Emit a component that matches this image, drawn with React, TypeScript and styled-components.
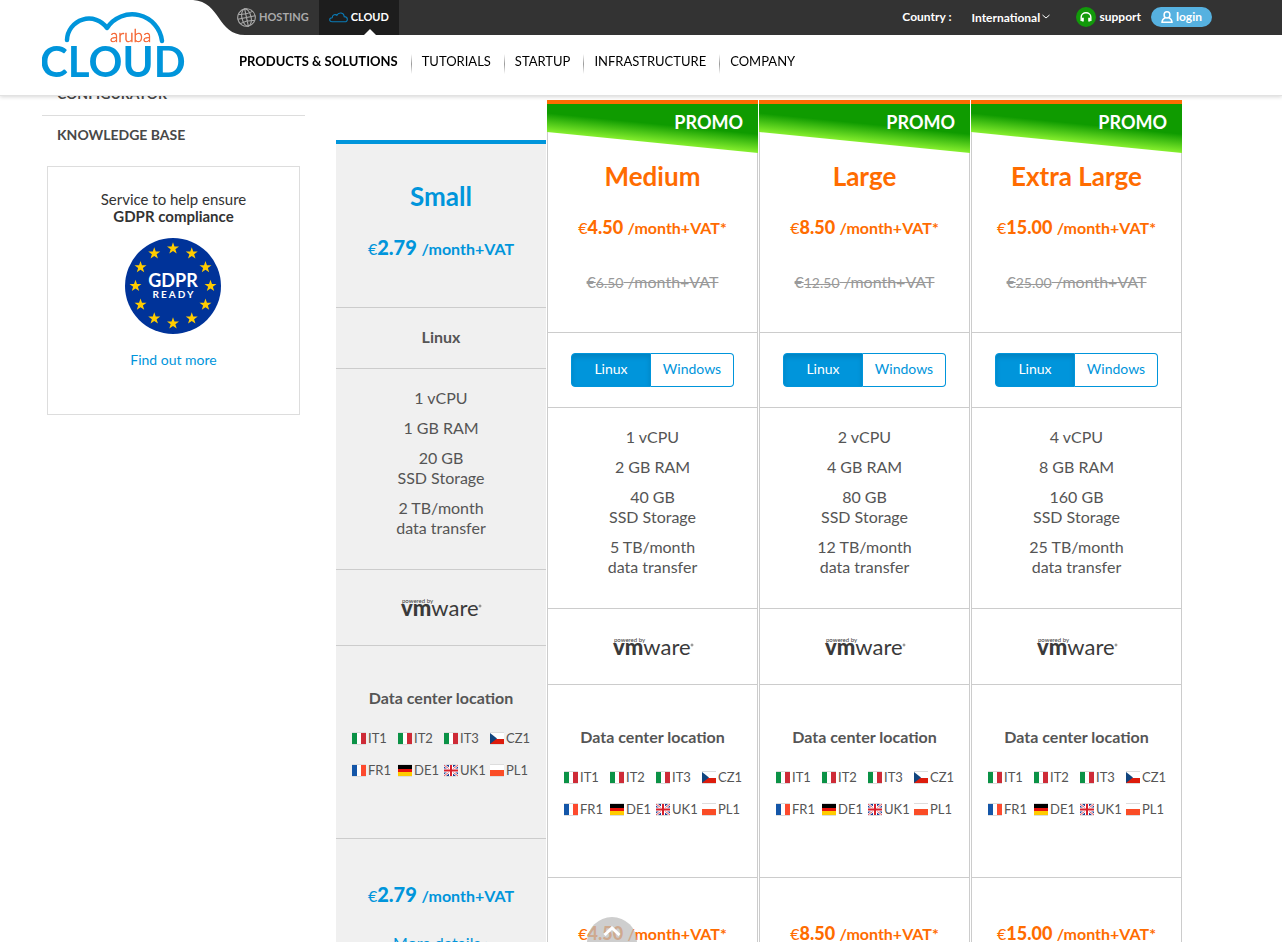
import React, { useState } from "react";
import styled, { createGlobalStyle, css } from "styled-components";

const blue = "#0095db";
const orange = "#ff6c00";
const line = "#cccccc";

const GlobalStyle = createGlobalStyle`
  *, *::before, *::after { box-sizing: border-box; }
  html, body, #root { height: 100%; }
  body { margin: 0; background: #fff; color: #555; font-family: Lato, "Liberation Sans", sans-serif; font-size: 16px; line-height: 20px; }
  button, select { font-family: inherit; }
  a { text-decoration: none; color: inherit; }
  h2, h3, p, ul { margin: 0; padding: 0; }
  ul { list-style: none; }
`;

const Page = styled.div`
  height: 100vh;
  overflow-y: auto;
  scrollbar-width: none;
`;

/* ---------- header ---------- */

const Header = styled.header`
  position: fixed;
  top: 0;
  left: 0;
  right: 0;
  z-index: 1;
  background: linear-gradient(#333, #333) right top / 50% 35px no-repeat #fff;
  border-bottom: 1px solid #e2e2e2;
  box-shadow: 0 1px 4px rgba(0, 0, 0, 0.16);
`;

const HeaderInner = styled.div`
  display: flex;
  max-width: 1200px;
  margin: 0 auto;
`;

const Brand = styled.a`
  flex: 0 0 152px;
  padding: 8px 0 0 1px;
  svg { display: block; }
`;

const HeaderBars = styled.div`
  flex: 1;
`;

const TopBar = styled.div`
  position: relative;
  display: flex;
  align-items: center;
  height: 35px;
  padding: 0 29px 1px 44px;
  background: #333;
  color: #fff;
  font-size: 12px;
  font-weight: 700;
`;

const Curve = styled.svg`
  position: absolute;
  left: 0;
  top: 0;
`;

const SiteTab = styled.a<{ $active?: boolean }>`
  position: relative;
  display: flex;
  align-items: center;
  align-self: flex-start;
  gap: 3px;
  height: 35px;
  padding: 0 10px 1px 0;
  color: #aaa;
  font-size: 11px;
  ${(p) =>
    p.$active &&
    css`
      padding-left: 10px;
      background: #1d1d1d;
      color: #fff;
      &::after {
        content: "";
        position: absolute;
        bottom: 0;
        left: 45px;
        border: 6px solid transparent;
        border-top: 0;
        border-bottom-color: #fff;
      }
    `}
`;

const Country = styled.label`
  display: flex;
  align-items: center;
  gap: 20px;
  margin-left: auto;
`;

const SelectBox = styled.span`
  display: flex;
  align-items: center;
`;

const Select = styled.select`
  appearance: none;
  border: 0;
  padding: 0;
  background: transparent;
  color: inherit;
  font-size: 12px;
  font-weight: 700;
`;

const Support = styled.a`
  display: flex;
  align-items: center;
  gap: 4px;
  margin: 0 10px 0 26px;
`;

const Login = styled.a`
  display: flex;
  align-items: center;
  gap: 3px;
  height: 20px;
  padding: 0 10px;
  border-radius: 10px;
  background: #56b1e0;
`;

const Nav = styled.nav`
  display: flex;
  height: 60px;
  padding: 16px 0 0 46px;
`;

const NavLink = styled.a<{ $active?: boolean }>`
  color: #000;
  font-size: 13px;
  font-weight: ${(p) => (p.$active ? 700 : 400)};
  &:not(:first-child)::before {
    content: "";
    display: inline-block;
    width: 1px;
    height: 20px;
    margin: 3px 10px 0 13px;
    vertical-align: top;
    background: linear-gradient(#fff, #999, #fff);
  }
`;

/* ---------- page body ---------- */

const Main = styled.main`
  display: flex;
  align-items: flex-start;
  gap: 31px;
  max-width: 1200px;
  margin: 0 auto;
  padding: 75px 59px 0 1px;
`;

const Sidebar = styled.aside`
  flex: 0 0 263px;
`;

const SideLink = styled.a`
  display: block;
  height: 41px;
  padding: 9px 15px;
  border-bottom: 1px solid #ddd;
  color: #484848;
  font-size: 14px;
  font-weight: 700;
  &:last-of-type { border-bottom: 0; }
`;

const GdprCard = styled.section`
  display: flex;
  flex-direction: column;
  align-items: center;
  height: 249px;
  margin: 9px 5px 0;
  padding-top: 24px;
  border: 1px solid #ddd;
  color: #333;
  font-size: 15px;
  line-height: 17px;
  text-align: center;
  svg { margin: 13px 0 15px; }
  a { color: ${blue}; font-size: 14px; line-height: 20px; }
`;

const Plans = styled.div`
  flex: 1;
  display: grid;
  grid-template-columns: 210px repeat(3, 1fr);
  gap: 1px;
  padding-top: 25px;
`;

const Plan = styled.article<{ $promo: boolean }>`
  text-align: center;
  ${(p) =>
    p.$promo
      ? css`
          --accent: ${orange};
          --price-size: 18px;
          border: 1px solid ${line};
          border-top: 0;
        `
      : css`
          --accent: ${blue};
          --price-size: 20px;
          margin-top: 40px;
          border-top: 4px solid ${blue};
          background: #f0f0f0;
        `}
`;

const Ribbon = styled.div`
  margin: 0 -1px;
  border-top: 4px solid ${orange};
  height: 53px;
`;

const RibbonShape = styled.div`
  height: 49px;
  padding: 8px 15px;
  color: #fff;
  font-size: 18px;
  font-weight: 700;
  text-align: right;
  background: linear-gradient(185.7deg, #0f9b00 43%, #86ef2e 70%);
  clip-path: polygon(0 0, 100% 0, 100% 100%, 0 28px);
`;

const Cell = styled.div<{ $height: number; $top: number }>`
  height: ${(p) => p.$height}px;
  padding-top: ${(p) => p.$top}px;
  border-bottom: 1px solid ${line};
  &:last-child { border-bottom: 0; }
`;

const PlanName = styled.h2`
  color: var(--accent);
  font-size: 26px;
  font-weight: 700;
  line-height: 32px;
`;

const Price = styled.p<{ $gap?: number }>`
  margin-top: ${(p) => p.$gap ?? 0}px;
  color: var(--accent);
  line-height: 26px;
  font-weight: 700;
  span { font-weight: 400; }
  strong { font-size: var(--price-size); }
`;

const OldPrice = styled.p`
  margin-top: 31px;
  color: #999;
  line-height: 20px;
  text-decoration: line-through;
  small { font-size: 14px; }
`;

const Toggle = styled.div`
  display: flex;
  width: 163px;
  height: 34px;
  margin: 0 auto;
`;

const ToggleButton = styled.button<{ $on: boolean }>`
  flex: ${(p) => (p.$on ? "1 1 80px" : "1 1 83px")};
  padding: 0 0 4px;
  border: 1px solid ${blue};
  background: ${(p) => (p.$on ? blue : "#fff")};
  color: ${(p) => (p.$on ? "#fff" : blue)};
  box-shadow: ${(p) => (p.$on ? "inset 0 3px 5px rgba(0,0,0,.125)" : "none")};
  font-size: 14px;
  &:first-child { border-radius: 4px 0 0 4px; }
  &:last-child { border-radius: 0 4px 4px 0; border-left: 0; }
`;

const Specs = styled.ul`
  display: flex;
  flex-direction: column;
  gap: 10px;
`;

const Heading = styled.h3`
  font-size: 16px;
  font-weight: 700;
  line-height: 20px;
`;

const Locations = styled.ul`
  display: grid;
  grid-template-columns: repeat(4, 46px);
  gap: 12px 0;
  margin-top: 20px;
  padding-left: 16px;
  li {
    display: flex;
    align-items: center;
    gap: 2px;
    font-size: 13px;
  }
`;

const MoreLink = styled.a`
  display: block;
  margin-top: 24px;
  color: ${blue};
`;

const BackTopTrack = styled.div`
  position: fixed;
  left: 0;
  right: 0;
  bottom: -25px;
  display: flex;
  justify-content: center;
  padding-right: 58px;
  pointer-events: none;
`;

const BackTop = styled.button`
  width: 50px;
  height: 50px;
  padding: 0;
  border: 0;
  border-radius: 50%;
  background: rgba(190, 190, 190, 0.75);
  pointer-events: auto;
  svg { display: block; margin: -16px auto 0; }
`;

/* ---------- drawings ---------- */

const Logo = () => (
  <svg width="146" height="76" viewBox="42 8 146 76" role="img" aria-label="Aruba Cloud">
    <g fill="none" stroke={blue} strokeWidth="4.5" strokeLinecap="round" strokeLinejoin="round">
      <path d="M67 40A22 22 0 0 1 107 28A30 30 0 0 1 162 41" />
    </g>
    <text x="110" y="42" fontSize="17" fontWeight="300" fill="#f4602c" stroke="#f4602c" strokeWidth=".4">aruba</text>
    <text x="40" y="77" fontSize="42" fontWeight="700" fill={blue}>CLOUD</text>
  </svg>
);

const Globe = () => (
  <svg width="19" height="19" viewBox="0 0 19 19" fill="none" stroke="#aaa" strokeWidth="1.1">
    <g transform="rotate(-12 9.5 9.5)">
      <circle cx="9.5" cy="9.5" r="8.8" />
      <ellipse cx="9.5" cy="9.5" rx="4.6" ry="8.8" />
      <path d="M9.5.7v17.6M.7 9.5h17.6M2.2 4.8Q9.5 7 16.8 4.8M2.2 14.2Q9.5 12 16.8 14.2" />
    </g>
  </svg>
);

const CloudIcon = () => (
  <svg width="19" height="11" viewBox="0 0 19 11" fill="none" stroke="#0a7cb8" strokeWidth="1.1">
    <path d="M3.2 9.8C-.2 9.6 0 5.6 3.2 5.7C3.4 2.6 6.6 2 7.9 3.3C9.6-.2 15 .2 15.2 4.6C19.4 4.8 19.2 9.8 15.8 9.8Z" />
  </svg>
);

const Headset = () => (
  <svg width="20" height="20" viewBox="0 0 20 20" fill="none">
    <circle cx="10" cy="10" r="10" fill="#129a0a" />
    <path d="M5.2 14V10A4.8 4.3 0 0 1 14.8 10V14" stroke="#fff" strokeWidth="1.4" />
    <path d="M6.8 10.8V14.4M13.2 10.8V14.4" stroke="#fff" strokeWidth="2" />
  </svg>
);

const UserIcon = () => (
  <svg width="12" height="13" viewBox="0 0 12 13" fill="none" stroke="#fff" strokeWidth="1.5">
    <ellipse cx="6" cy="3.9" rx="2.9" ry="3.1" />
    <path d="M4.2 6.6C2 7.8 1 9 1 11.3H11C11 9 10 7.8 7.8 6.6" />
  </svg>
);

const star = (cx: number, cy: number) =>
  Array.from({ length: 10 }, (_, i) => {
    const r = i % 2 ? 2.5 : 6.3;
    const a = (Math.PI * i) / 5 - Math.PI / 2;
    return `${(cx + r * Math.cos(a)).toFixed(2)},${(cy + r * Math.sin(a)).toFixed(2)}`;
  }).join(" ");

const GdprBadge = () => (
  <svg width="97" height="97" viewBox="0 0 97 97" role="img" aria-label="GDPR ready">
    <circle cx="48" cy="48" r="48" fill="#039" />
    {Array.from({ length: 12 }, (_, i) => {
      const a = (Math.PI * i) / 6;
      return <polygon key={i} fill="#fc0" points={star(48 + 37.5 * Math.sin(a), 48 - 37.5 * Math.cos(a))} />;
    })}
    <g fill="#fff" fontWeight="700" textAnchor="middle">
      <text x="48" y="49" fontSize="18">GDPR</text>
      <text x="49" y="60" fontSize="10" letterSpacing="2">READY</text>
    </g>
  </svg>
);

const VmwareLogo = () => (
  <svg width="84" height="24" viewBox="0 0 84 24" role="img" aria-label="powered by vmware" fill="#3a3a3a">
    <text x="3" y="6" fontSize="6">powered by</text>
    <text x="2" y="19" fontSize="22"><tspan fontWeight="900">vm</tspan>ware</text>
    <circle cx="81" cy="9" r="1" fill="none" stroke="#3a3a3a" strokeWidth=".6" />
  </svg>
);

const tricolor = (a: string, b: string, c: string) => (
  <>
    <path fill={a} d="M0 0h5v11H0z" />
    <path fill={b} d="M5 0h4v11H5z" />
    <path fill={c} d="M9 0h5v11H9z" />
  </>
);

const flags: Record<string, React.ReactNode> = {
  IT: tricolor("#0b9246", "#fff", "#ce2b37"),
  FR: tricolor("#1456a8", "#fff", "#fd4a2e"),
  CZ: (
    <>
      <path fill="#fff" d="M0 0h14v6H0z" />
      <path fill="#dd1c0c" d="M0 6h14v5H0z" />
      <path fill="#11457e" d="M0 0L7 5.5L0 11z" />
    </>
  ),
  DE: (
    <>
      <path d="M0 0h14v4H0z" />
      <path fill="#e8140c" d="M0 4h14v3H0z" />
      <path fill="#fc0" d="M0 7h14v4H0z" />
    </>
  ),
  UK: (
    <>
      <path fill="#1c3f94" d="M0 0h14v11H0z" />
      <path stroke="#fff" strokeWidth="2.4" d="M0 0L14 11M14 0L0 11" />
      <path stroke="#d8202c" strokeWidth=".8" d="M0 0L14 11M14 0L0 11" />
      <path stroke="#fff" strokeWidth="4" d="M7 0V11M0 5.5H14" />
      <path stroke="#d8202c" strokeWidth="2" d="M7 0V11M0 5.5H14" />
    </>
  ),
  PL: (
    <>
      <path fill="#fff" d="M0 0h14v5H0z" />
      <path fill="#fa4c26" d="M0 5h14v6H0z" />
    </>
  ),
};

const Flag = ({ code }: { code: string }) => (
  <svg width="14" height="13" viewBox="0 -1 14 13">
    <path fill="#ddd" d="M0-1h14v13H0z" />
    {flags[code]}
  </svg>
);

/* ---------- page ---------- */

const locations = ["IT1", "IT2", "IT3", "CZ1", "FR1", "DE1", "UK1", "PL1"];

type PlanData = {
  name: string;
  price: string;
  old?: string;
  cpu: number;
  ram: number;
  disk: number;
  transfer: number;
};

const plans: PlanData[] = [
  { name: "Small", price: "2.79", cpu: 1, ram: 1, disk: 20, transfer: 2 },
  { name: "Medium", price: "4.50", old: "6.50", cpu: 1, ram: 2, disk: 40, transfer: 5 },
  { name: "Large", price: "8.50", old: "12.50", cpu: 2, ram: 4, disk: 80, transfer: 12 },
  { name: "Extra Large", price: "15.00", old: "25.00", cpu: 4, ram: 8, disk: 160, transfer: 25 },
];

const PriceLine = ({ plan, gap }: { plan: PlanData; gap?: number }) => (
  <Price $gap={gap}>
    <span>€</span>
    <strong>{plan.price} </strong>/month+VAT{plan.old ? "*" : ""}
  </Price>
);

const OsToggle = () => {
  const [os, setOs] = useState("Linux");
  return (
    <Toggle>
      {["Linux", "Windows"].map((name) => (
        <ToggleButton key={name} type="button" $on={os === name} aria-pressed={os === name} onClick={() => setOs(name)}>
          {name}
        </ToggleButton>
      ))}
    </Toggle>
  );
};

const PlanColumn = ({ plan }: { plan: PlanData }) => {
  const promo = Boolean(plan.old);
  return (
    <Plan $promo={promo}>
      {promo && (
        <Ribbon>
          <RibbonShape>PROMO</RibbonShape>
        </Ribbon>
      )}
      <Cell $height={promo ? 180 : 164} $top={promo ? 7 : 36}>
        <PlanName>{plan.name}</PlanName>
        <PriceLine plan={plan} gap={22} />
        {promo && (
          <OldPrice>
            €<small>{plan.old}</small> /month+VAT
          </OldPrice>
        )}
      </Cell>
      <Cell $height={promo ? 75 : 61} $top={promo ? 20 : 19}>
        {promo ? <OsToggle /> : <Heading>Linux</Heading>}
      </Cell>
      <Cell $height={201} $top={19}>
        <Specs>
          <li>{plan.cpu} vCPU</li>
          <li>{plan.ram} GB RAM</li>
          <li>{plan.disk} GB<br />SSD Storage</li>
          <li>{plan.transfer} TB/month<br />data transfer</li>
        </Specs>
      </Cell>
      <Cell $height={76} $top={27}>
        <VmwareLogo />
      </Cell>
      <Cell $height={193} $top={42}>
        <Heading>Data center location</Heading>
        <Locations>
          {locations.map((code) => (
            <li key={code}>
              <Flag code={code.slice(0, 2)} />
              {code}
            </li>
          ))}
        </Locations>
      </Cell>
      <Cell $height={140} $top={42}>
        <PriceLine plan={plan} />
        <MoreLink href="#details">More details ›</MoreLink>
      </Cell>
    </Plan>
  );
};

export default function App() {
  return (
    <Page>
      <GlobalStyle />
      <Header>
        <HeaderInner>
          <Brand href="#home"><Logo /></Brand>
          <HeaderBars>
            <TopBar>
              <Curve width="54" height="35" viewBox="0 0 54 35">
                <path fill="#fff" d="M0 0C28 2 24 35 52 35H0Z" />
              </Curve>
              <SiteTab href="#hosting"><Globe />HOSTING</SiteTab>
              <SiteTab href="#cloud" $active><CloudIcon />CLOUD</SiteTab>
              <Country>
                Country :
                <SelectBox>
                  <Select defaultValue="International">
                    <option>International</option>
                  </Select>
                  <svg width="9" height="6" viewBox="0 0 9 6" fill="none" stroke="#fff">
                    <path d="M1.5 1L5 4L8.5 1" />
                  </svg>
                </SelectBox>
              </Country>
              <Support href="#support"><Headset />support</Support>
              <Login href="#login"><UserIcon />login</Login>
            </TopBar>
            <Nav>
              <NavLink href="#products" $active>PRODUCTS &amp; SOLUTIONS</NavLink>
              <NavLink href="#tutorials">TUTORIALS</NavLink>
              <NavLink href="#startup">STARTUP</NavLink>
              <NavLink href="#infrastructure">INFRASTRUCTURE</NavLink>
              <NavLink href="#company">COMPANY</NavLink>
            </Nav>
          </HeaderBars>
        </HeaderInner>
      </Header>
      <Main>
        <Sidebar>
          <SideLink href="#configurator">CONFIGURATOR</SideLink>
          <SideLink href="#kb">KNOWLEDGE BASE</SideLink>
          <GdprCard>
            <p>Service to help ensure<br /><strong>GDPR compliance</strong></p>
            <GdprBadge />
            <a href="#gdpr">Find out more</a>
          </GdprCard>
        </Sidebar>
        <Plans>
          {plans.map((plan) => <PlanColumn key={plan.name} plan={plan} />)}
        </Plans>
      </Main>
      <BackTopTrack>
        <BackTop type="button" aria-label="Back to top">
          <svg width="18" height="10" viewBox="0 0 18 10" fill="none" stroke="#fff" strokeWidth="3">
            <path d="M1.5 9L9 2L16.5 9" />
          </svg>
        </BackTop>
      </BackTopTrack>
    </Page>
  );
}
